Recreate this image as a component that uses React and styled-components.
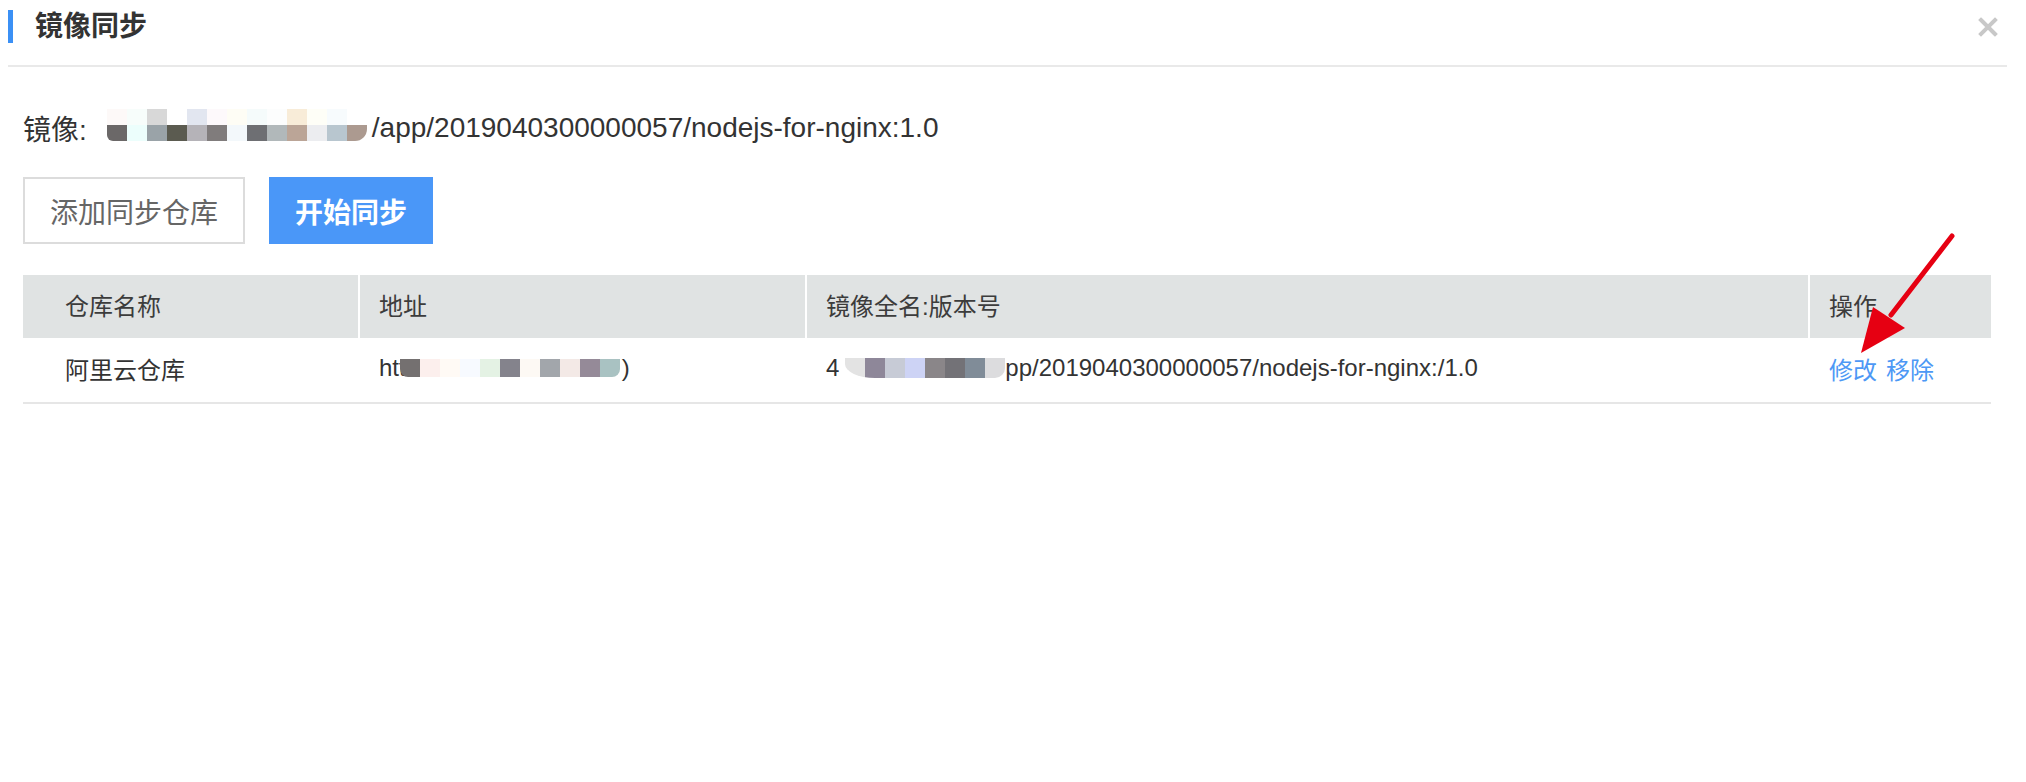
import React from "react";
import styled, { createGlobalStyle } from "styled-components";

const GlobalStyle = createGlobalStyle`
  html, body {
    margin: 0;
    padding: 0;
    background: #fff;
  }
  body {
    font-family: "Liberation Sans", "Noto Sans CJK SC", sans-serif;
    color: #333;
  }
`;

const Page = styled.div`
  position: relative;
  width: 2026px;
  height: 782px;
  background: #fff;
`;

const Header = styled.div`
  display: flex;
  justify-content: space-between;
  align-items: flex-start;
  height: 55px;
  margin: 0 19px 0 8px;
  padding: 10px 9px 0 0;
  border-bottom: 2px solid #e9e9e9;
`;

const Title = styled.h2`
  margin: 0;
  height: 33px;
  line-height: 33px;
  padding-left: 22px;
  border-left: 5px solid #3b90f5;
  font-size: 28px;
  font-weight: bold;
  color: #333;
`;

const Close = styled.button`
  display: flex;
  margin-top: 7px;
  padding: 0;
  border: 0;
  background: none;
  cursor: pointer;
`;

const Body = styled.div`
  padding: 0 35px 0 23px;
`;

const InfoLine = styled.div`
  display: flex;
  align-items: center;
  margin-top: 41px;
  height: 40px;
  font-size: 28px;
  color: #333;
`;

const Mosaic = styled.div`
  display: grid;
  grid-template-columns: repeat(${(p) => p.$cols}, ${(p) => p.$w}px);
  grid-auto-rows: ${(p) => p.$h}px;
  margin: ${(p) => p.$margin || "0"};
  border-radius: ${(p) => p.$radius || "0"};
  overflow: hidden;
  flex-shrink: 0;
`;

const Block = styled.div`
  background: ${(p) => p.$c};
`;

const Toolbar = styled.div`
  display: flex;
  gap: 24px;
  margin-top: 29px;
`;

const Button = styled.button`
  height: 67px;
  padding: 0 ${(p) => (p.$primary ? "24px" : "25px")};
  font-family: inherit;
  font-size: 28px;
  border-radius: 0;
  cursor: pointer;
  border: 2px solid ${(p) => (p.$primary ? "#4a97f8" : "#dcdcdc")};
  background: ${(p) => (p.$primary ? "#4a97f8" : "#fff")};
  color: ${(p) => (p.$primary ? "#fff" : "#666")};
  font-weight: ${(p) => (p.$primary ? "bold" : "normal")};
`;

const Table = styled.div`
  display: grid;
  grid-template-columns: 335px 447px 1003px 1fr;
  margin-top: 31px;
  font-size: 24px;
`;

const HeadCell = styled.div`
  display: flex;
  align-items: center;
  height: 63px;
  box-sizing: border-box;
  padding-bottom: 4px;
  background: #e0e3e3;
  color: #3c3c3c;
  padding-left: ${(p) => (p.$first ? "42px" : "19px")};
  border-left: ${(p) => (p.$first ? "0" : "2px solid #fff")};
`;

const Cell = styled.div`
  display: flex;
  align-items: center;
  height: 64px;
  box-sizing: content-box;
  padding-bottom: 0;
  color: #333;
  white-space: nowrap;
  padding-left: ${(p) => (p.$first ? "42px" : "21px")};
  border-bottom: 2px solid #e6e6e6;
  & > * {
    margin-top: -4px;
  }
`;

const Link = styled.a`
  color: #4d98f5;
  cursor: pointer;
  margin-right: 9px;
`;

const Arrow = styled.svg`
  position: absolute;
  left: 1845px;
  top: 225px;
  pointer-events: none;
`;

const infoMosaic = [
  ["#fdf9f8", "#f7fdfb", "#d8d8d8", "#ffffff", "#e2e6f0", "#fdf9fb", "#fefdf5", "#f5fbfb", "#fcfdfd", "#f8ecd8", "#fefef7", "#f7fbfd", "#ffffff"],
  ["#6b6868", "#ecfefc", "#9aa3a8", "#5b5b50", "#b5b3b8", "#807c7c", "#f3f8fb", "#6e6f73", "#b1b8ba", "#bba597", "#ecedf0", "#b8c6cf", "#ac9a90"],
];

const addrMosaic = ["#747070", "#fcefed", "#fffaf5", "#f7faff", "#e4f2e4", "#84838c", "#fdf9f4", "#a2a6ab", "#f3e9e6", "#958a98", "#a9c2c2"];

const imageMosaic = ["#e3e3e3", "#8e8799", "#c7cbd6", "#cdd3f5", "#8a8689", "#737277", "#808c98", "#dcdcde"];

const App = () => {
  return (
    <Page>
      <GlobalStyle />
      <Header>
        <Title>镜像同步</Title>
        <Close title="关闭">
          <svg width="20" height="20" viewBox="0 0 20 20">
            <path d="M3 3 L17 17 M17 3 L3 17" stroke="#c8c8c8" strokeWidth="4" strokeLinecap="square" />
          </svg>
        </Close>
      </Header>

      <Body>
        <InfoLine>
          <span>镜像:</span>
          <Mosaic $cols={13} $w={20} $h={16} $margin="-6px 5px 0 20px" $radius="0 0 12px 6px">
            {infoMosaic.flat().map((c, i) => (
              <Block key={i} $c={c} />
            ))}
          </Mosaic>
          <span>/app/2019040300000057/nodejs-for-nginx:1.0</span>
        </InfoLine>

        <Toolbar>
          <Button>添加同步仓库</Button>
          <Button $primary>开始同步</Button>
        </Toolbar>

        <Table>
          <HeadCell $first>仓库名称</HeadCell>
          <HeadCell>地址</HeadCell>
          <HeadCell>镜像全名:版本号</HeadCell>
          <HeadCell>操作</HeadCell>

          <Cell $first>
            <span>阿里云仓库</span>
          </Cell>
          <Cell>
            <span>htt</span>
            <Mosaic $cols={11} $w={20} $h={18} $margin="6px 2px 0 -6px" $radius="0 0 8px 8px">
              {addrMosaic.map((c, i) => (
                <Block key={i} $c={c} />
              ))}
            </Mosaic>
            <span>)</span>
          </Cell>
          <Cell>
            <span>4</span>
            <Mosaic $cols={8} $w={20} $h={20} $margin="4px 0 0 6px" $radius="0 0 10px 30px / 0 0 10px 14px">
              {imageMosaic.map((c, i) => (
                <Block key={i} $c={c} />
              ))}
            </Mosaic>
            <span>pp/2019040300000057/nodejs-for-nginx:/1.0</span>
          </Cell>
          <Cell>
            <span>
              <Link>修改</Link>
              <Link>移除</Link>
            </span>
          </Cell>
        </Table>
      </Body>

      <Arrow width="120" height="140" viewBox="0 0 120 140">
        <line x1="107" y1="11" x2="46" y2="90" stroke="#e60012" strokeWidth="5" strokeLinecap="round" />
        <polygon points="16,128 28,82 60,103" fill="#e60012" />
      </Arrow>
    </Page>
  );
};

export default App;
